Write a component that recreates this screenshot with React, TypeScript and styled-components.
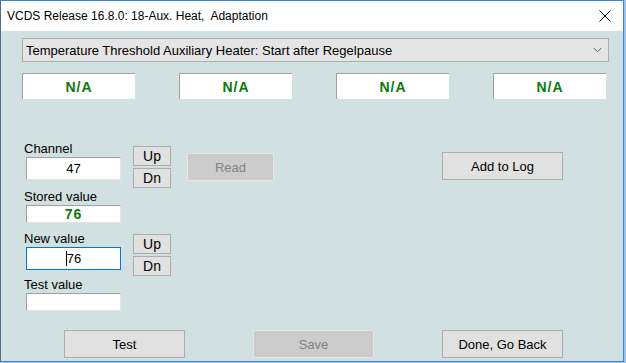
import React from 'react';
import styled, { createGlobalStyle } from 'styled-components';

const GlobalStyle = createGlobalStyle`
  html, body {
    margin: 0;
    padding: 0;
    background: #9cc3ea;
    width: 626px;
    height: 363px;
    overflow: hidden;
  }
`

const Window = styled.div`
  width: 622px;
  height: 360px;
  border: 1px solid #3a86d8;
  border-left-color: #4f6f90;
  display: flex;
  flex-direction: column;
  background: #d1e0e0;
  font-family: "Liberation Sans", Arial, sans-serif;
  font-size: 13px;
  color: #000;
`

const TitleBar = styled.div`
  height: 30px;
  flex: none;
  background: #fff;
  display: flex;
  align-items: center;
  padding-left: 6px;
  font-family: "Liberation Sans", Arial, sans-serif;
  font-size: 12px;
  white-space: pre;
`

const Title = styled.span`
  flex: 1;
  padding-bottom: 1px;
`

const CloseBox = styled.div`
  width: 40px;
  height: 30px;
  display: flex;
  align-items: center;
  justify-content: center;
  margin-right: -2px;
`

const Client = styled.div`
  flex: 1;
  display: flex;
  flex-direction: column;
  padding: 7px 0 0 21px;
`

const Select = styled.div`
  width: 576px;
  height: 22px;
  border: 1px solid #adadad;
  background: #e5e5e5;
  display: flex;
  align-items: center;
  justify-content: space-between;
  padding: 0 6px 0 3px;
`

const NaRow = styled.div`
  display: grid;
  grid-template-columns: repeat(4, 113px);
  column-gap: 44px;
  margin-top: 11px;
`

const NaBox = styled.div`
  height: 25px;
  background: #fff;
  border-top: 1px solid #a0a0a0;
  border-left: 1px solid #a0a0a0;
  display: flex;
  align-items: center;
  justify-content: center;
  font-weight: bold;
  color: #0a7a0a;
  font-size: 14px;
  letter-spacing: 1px;
`

const Middle = styled.div`
  display: flex;
  align-items: flex-start;
  margin-top: 41px;
  padding-left: 2px;
`

const Fields = styled.div`
  display: flex;
  flex-direction: column;
`

const Field = styled.div<{ $gap: number }>`
  display: grid;
  grid-template-columns: 97px 38px;
  column-gap: 12px;
  margin-top: ${p => p.$gap}px;
`

const Label = styled.div`
  grid-column: 1;
  height: 17px;
  line-height: 15px;
  padding-top: 1px;
  box-sizing: border-box;
`

const Input = styled.div<{ $h: number; $focus?: boolean; $bold?: boolean }>`
  grid-column: 1;
  justify-self: end;
  width: 95px;
  height: ${p => p.$h}px;
  box-sizing: border-box;
  background: #fff;
  border: 1px solid ${p => (p.$focus ? '#0078d7' : '#e3e3e3')};
  border-top-color: ${p => (p.$focus ? '#0078d7' : '#a0a0a0')};
  border-left-color: ${p => (p.$focus ? '#0078d7' : '#a0a0a0')};
  display: flex;
  align-items: center;
  justify-content: center;
  font-weight: ${p => (p.$bold ? 'bold' : 'normal')};
  color: ${p => (p.$bold ? '#0a7a0a' : '#000')};
  font-size: ${p => (p.$bold ? 14 : 13)}px;
  letter-spacing: ${p => (p.$bold ? 1 : 0)}px;
`

const Caret = styled.span`
  display: inline-block;
  width: 1px;
  height: 15px;
  background: #000;
`

const Spin = styled.div<{ $drop: number }>`
  grid-column: 2;
  grid-row: 1 / span 2;
  align-self: end;
  margin-bottom: -${p => p.$drop}px;
  display: flex;
  flex-direction: column;
  gap: 2px;
`

const SmallButton = styled.div`
  width: 38px;
  height: 20px;
  box-sizing: border-box;
  border: 1px solid #adadad;
  background: #e1e1e1;
  display: flex;
  align-items: center;
  justify-content: center;
  font-size: 14px;
`

const Button = styled.div<{ $disabled?: boolean; $w?: number }>`
  width: ${p => p.$w ?? 121}px;
  height: 28px;
  box-sizing: border-box;
  border: 1px solid ${p => (p.$disabled ? '#e6e6e6' : '#adadad')};
  background: ${p => (p.$disabled ? '#cccccc' : '#e1e1e1')};
  color: ${p => (p.$disabled ? '#838383' : '#000')};
  display: flex;
  align-items: center;
  justify-content: center;
  font-size: 13px;
`

const ReadSlot = styled.div`
  margin-left: 16px;
  margin-top: 13px;
`

const LogSlot = styled.div`
  margin-left: 168px;
  margin-top: 12px;
`

const Bottom = styled.div`
  display: flex;
  gap: 68px;
  margin-top: 19px;
  padding-left: 42px;
`

const Chevron = () => (
  <svg width="9" height="6" viewBox="0 0 9 6">
    <path d="M0.5 0.8 L4.5 4.8 L8.5 0.8" fill="none" stroke="#606060" strokeWidth="1" />
  </svg>
)

const CloseIcon = () => (
  <svg width="12" height="12" viewBox="0 0 12 12">
    <path d="M0.5 0.5 L11.5 11.5 M11.5 0.5 L0.5 11.5" fill="none" stroke="#000" strokeWidth="1" />
  </svg>
)

const App: React.FC = () => {
  return (
    <>
      <GlobalStyle />
      <Window>
        <TitleBar>
          <Title>VCDS Release 16.8.0: 18-Aux. Heat,  Adaptation</Title>
          <CloseBox><CloseIcon /></CloseBox>
        </TitleBar>
        <Client>
          <Select>
            <span>Temperature Threshold Auxiliary Heater: Start after Regelpause</span>
            <Chevron />
          </Select>
          <NaRow>
            <NaBox>N/A</NaBox>
            <NaBox>N/A</NaBox>
            <NaBox>N/A</NaBox>
            <NaBox>N/A</NaBox>
          </NaRow>
          <Middle>
            <Fields>
              <Field $gap={0}>
                <Label>Channel</Label>
                <Input $h={23}>47</Input>
                <Spin $drop={8}>
                  <SmallButton>Up</SmallButton>
                  <SmallButton>Dn</SmallButton>
                </Spin>
              </Field>
              <Field $gap={8}>
                <Label>Stored value</Label>
                <Input $h={18} $bold>76</Input>
              </Field>
              <Field $gap={7}>
                <Label>New value</Label>
                <Input $h={23} $focus><Caret />76</Input>
                <Spin $drop={6}>
                  <SmallButton>Up</SmallButton>
                  <SmallButton>Dn</SmallButton>
                </Spin>
              </Field>
              <Field $gap={6}>
                <Label>Test value</Label>
                <Input $h={18} />
              </Field>
            </Fields>
            <ReadSlot>
              <Button $disabled $w={87}>Read</Button>
            </ReadSlot>
            <LogSlot>
              <Button>Add to Log</Button>
            </LogSlot>
          </Middle>
          <Bottom>
            <Button>Test</Button>
            <Button $disabled>Save</Button>
            <Button>Done, Go Back</Button>
          </Bottom>
        </Client>
      </Window>
    </>
  );
}

export default App;
